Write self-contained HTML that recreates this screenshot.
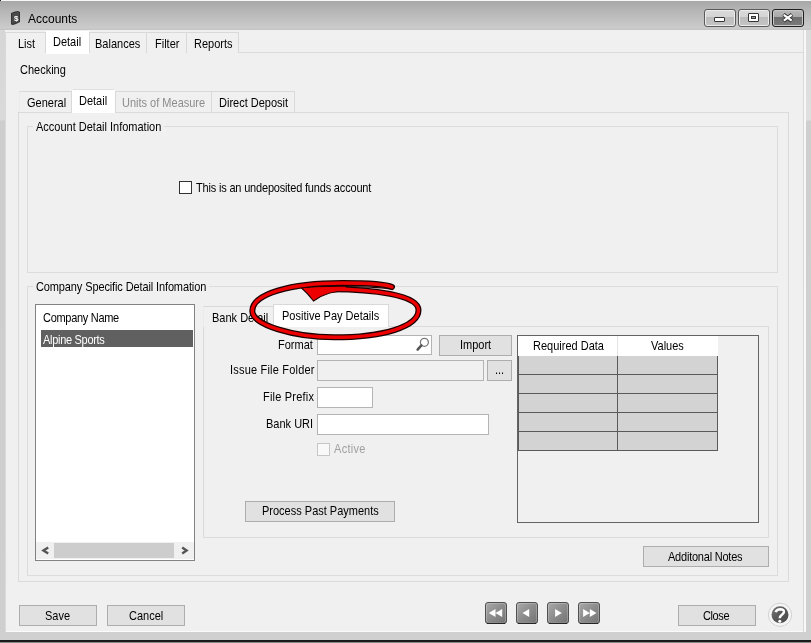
<!DOCTYPE html>
<html><head><meta charset="utf-8">
<style>
*{box-sizing:border-box}
html,body{margin:0;padding:0;width:811px;height:643px;overflow:hidden;background:#f0f0f0}
body{position:relative;font-family:"Liberation Sans",sans-serif;font-size:11px;color:#000}
.a{position:absolute}
.t{position:absolute;white-space:nowrap;font-size:11px;line-height:15px;will-change:transform;transform-origin:0 11.3px;transform:scaleY(1.1)}
.tab{position:absolute;background:#f0f0f0;border:1px solid #d9d9d9;border-bottom:none}
.tabs{position:absolute;background:#fff;border:1px solid #d9d9d9;border-bottom:none}
.grp{position:absolute;border:1px solid #dcdcdc}
.btn{position:absolute;background:#e1e1e1;border:1px solid #adadad}
.inp{position:absolute;background:#fff;border:1px solid #b4b4b4}
</style></head><body>
<!-- frame -->
<div class="a" style="left:0;top:0;width:811px;height:1px;background:#f6f6f6"></div>
<div class="a" style="left:0;top:0;width:1px;height:1px;background:#202020"></div>
<div class="a" style="left:0;top:1px;width:811px;height:29px;background:linear-gradient(#a7a7a7,#b6b6b6 35%,#cbcbcb 92%,#c3c3c3)"></div>
<div class="a" style="left:0;top:30px;width:5px;height:613px;background:linear-gradient(#d6d6d6,#dadada 90px,#cdcdcd 91px,#cfcfcf)"></div>
<div class="a" style="left:806px;top:30px;width:5px;height:613px;background:linear-gradient(#dcdcdc,#e0e0e0 90px,#cfcfcf 91px,#d0d0d0)"></div>
<div class="a" style="left:0;top:632px;width:811px;height:8px;background:#d0d0d0"></div>
<div class="a" style="left:5px;top:631px;width:801px;height:1px;background:#fbfbfb"></div>
<div class="a" style="left:5px;top:52px;width:1px;height:580px;background:#f7f7f7"></div>
<div class="a" style="left:803px;top:30px;width:1px;height:23px;background:#dcdcdc"></div>
<div class="a" style="left:804px;top:30px;width:2px;height:602px;background:#f8f8f8"></div>
<div class="a" style="left:0;top:640px;width:811px;height:2px;background:#1a1a1a"></div>
<div class="a" style="left:0;top:642px;width:811px;height:1px;background:#8a8a8a"></div>

<!-- title -->
<div class="t" style="left:28px;top:12px;font-size:12px;line-height:14px;color:#000;transform:none">Accounts</div>

<!-- main tabs -->
<div class="a" style="left:5px;top:52px;width:799px;height:580px;border:1px solid #dadada;border-bottom:none;border-right-color:#d8d8d8"></div>
<div class="tab" style="left:5px;top:32px;width:41px;height:21px"></div>
<div class="tabs" style="left:46px;top:31px;width:43px;height:23px;border-color:#fff"></div>
<div class="tab" style="left:89px;top:32px;width:58px;height:21px"></div>
<div class="tab" style="left:146px;top:32px;width:41px;height:21px"></div>
<div class="tab" style="left:186px;top:32px;width:53px;height:21px"></div>
<div class="t" style="left:18px;top:37px">List</div>
<div class="t" style="left:53px;top:35px">Detail</div>
<div class="t" style="left:95px;top:37px">Balances</div>
<div class="t" style="left:155px;top:37px">Filter</div>
<div class="t" style="left:194px;top:37px">Reports</div>

<div class="t" style="left:20px;top:63px">Checking</div>

<!-- inner tabs -->
<div class="a" style="left:18px;top:112px;width:771px;height:470px;border:1px solid #dadada"></div>
<div class="tab" style="left:19px;top:91px;width:53px;height:21px;border-left-color:#ebebeb"></div>
<div class="tabs" style="left:72px;top:89px;width:43px;height:24px;border-color:#fff;border-top-color:#dedede"></div>
<div class="tab" style="left:115px;top:91px;width:97px;height:21px"></div>
<div class="tab" style="left:211px;top:91px;width:84px;height:21px"></div>
<div class="t" style="left:27px;top:96px">General</div>
<div class="t" style="left:79px;top:94px">Detail</div>
<div class="t" style="left:122px;top:96px;color:#8c8c8c">Units of Measure</div>
<div class="t" style="left:219px;top:96px">Direct Deposit</div>

<!-- group 1 -->
<div class="grp" style="left:27px;top:126px;width:751px;height:147px"></div>
<div class="t" style="left:33px;top:120px;padding:0 3px;background:#f0f0f0">Account Detail Infomation</div>
<div class="a" style="left:179px;top:181px;width:13px;height:13px;background:#fff;border:1px solid #333"></div>
<div class="t" style="left:196px;top:181px;letter-spacing:-0.18px">This is an undeposited funds account</div>

<!-- group 2 -->
<div class="grp" style="left:27px;top:286px;width:751px;height:290px"></div>
<div class="t" style="left:33px;top:280px;padding:0 3px;background:#f0f0f0;letter-spacing:-0.12px">Company Specific Detail Infomation</div>

<!-- list -->
<div class="a" style="left:35px;top:304px;width:160px;height:257px;background:#fff;border:1px solid #828282"></div>
<div class="t" style="left:43px;top:311px;letter-spacing:-0.3px">Company Name</div>
<div class="a" style="left:41px;top:330px;width:152px;height:17px;background:#606060"></div>
<div class="t" style="left:43px;top:333px;color:#fff;letter-spacing:-0.3px">Alpine Sports</div>
<div class="a" style="left:36px;top:542px;width:158px;height:17px;background:#f0f0f0"></div>
<div class="a" style="left:54px;top:543px;width:120px;height:15px;background:#cdcdcd"></div>

<!-- bank tabs -->
<div class="a" style="left:203px;top:326px;width:566px;height:212px;border:1px solid #dadada"></div>
<div class="tab" style="left:203px;top:306px;width:72px;height:21px;border-left-color:#ebebeb"></div>
<div class="tabs" style="left:273px;top:304px;width:116px;height:23px;border-color:#d9d9d9"></div>
<div class="t" style="left:212px;top:311px">Bank Detail</div>
<div class="t" style="left:282px;top:309px">Positive Pay Details</div>

<div class="t" style="left:278px;top:338px">Format</div>
<div class="inp" style="left:317px;top:335px;width:115px;height:20px"></div>
<div class="btn" style="left:439px;top:335px;width:73px;height:21px"></div>
<div class="t" style="left:460px;top:338px">Import</div>
<div class="t" style="left:230px;top:363px;letter-spacing:0.2px">Issue File Folder</div>
<div class="inp" style="left:317px;top:360px;width:167px;height:21px;background:#f0f0f0;border-color:#b4b4b4"></div>
<div class="btn" style="left:487px;top:360px;width:25px;height:21px"></div>
<div class="t" style="left:263px;top:390px;letter-spacing:0.2px">File Prefix</div>
<div class="inp" style="left:317px;top:387px;width:56px;height:21px"></div>
<div class="t" style="left:266px;top:417px">Bank URI</div>
<div class="inp" style="left:317px;top:414px;width:172px;height:21px"></div>
<div class="a" style="left:317px;top:443px;width:13px;height:13px;border:1px solid #c6c6c6;background:#f9f9f9"></div>
<div class="t" style="left:334px;top:442px;color:#a0a0a0;letter-spacing:0.3px">Active</div>

<div class="btn" style="left:245px;top:501px;width:150px;height:21px"></div>
<div class="t" style="left:262px;top:504px">Process Past Payments</div>

<!-- grid -->
<div class="a" style="left:517px;top:335px;width:242px;height:188px;border:1px solid #646464;background:#f0f0f0"></div>
<div class="a" style="left:518px;top:336px;width:200px;height:20px;background:#fff"></div>
<div class="t" style="left:533px;top:339px">Required Data</div>
<div class="t" style="left:651px;top:339px">Values</div>

<div class="btn" style="left:643px;top:546px;width:126px;height:21px"></div>
<div class="t" style="left:668px;top:550px;letter-spacing:-0.22px">Additonal Notes</div>

<!-- bottom buttons -->
<div class="btn" style="left:19px;top:605px;width:78px;height:21px"></div>
<div class="t" style="left:45px;top:609px">Save</div>
<div class="btn" style="left:107px;top:605px;width:78px;height:21px"></div>
<div class="t" style="left:129px;top:609px">Cancel</div>
<div class="btn" style="left:678px;top:605px;width:78px;height:21px"></div>
<div class="t" style="left:703px;top:609px;letter-spacing:-0.4px">Close</div>


<!-- title icon -->
<svg class="a" style="left:0;top:0" width="30" height="30">
<polygon points="11,13 15,11.5 18,11 20,12 20,22 16,24 13,25 11,24.5" fill="#333"/>
<polygon points="12,13.5 19,11.5 19,21.5 12,24" fill="#4a4a4a"/>
<text x="16.2" y="20.8" font-family="Liberation Sans" font-size="8" font-weight="bold" fill="#fff" text-anchor="middle">$</text>
</svg>
<!-- window buttons -->
<div class="a" style="left:704px;top:9px;width:32px;height:18px;border:1px solid #5a5a5a;border-radius:3px;background:linear-gradient(#dadada,#d4d4d4 45%,#bcbcbc 46%,#c4c4c4);box-shadow:inset 0 0 0 1px #ececec"></div>
<div class="a" style="left:714px;top:17px;width:11px;height:5px;border:1px solid #333;border-radius:1px;background:#fff"></div>
<div class="a" style="left:738px;top:9px;width:32px;height:18px;border:1px solid #5a5a5a;border-radius:3px;background:linear-gradient(#dadada,#d4d4d4 45%,#bcbcbc 46%,#c4c4c4);box-shadow:inset 0 0 0 1px #ececec"></div>
<div class="a" style="left:748px;top:13px;width:11px;height:9px;border:1px solid #333;border-radius:1px;background:#fff"></div>
<div class="a" style="left:751px;top:16px;width:5px;height:3px;border:1px solid #333;background:#9a9a9a"></div>
<div class="a" style="left:772px;top:9px;width:32px;height:18px;border:1px solid #1e1e1e;border-radius:3px;background:linear-gradient(#b8b8b8,#a8a8a8 45%,#6e6e6e 46%,#7a7a7a);box-shadow:inset 0 0 0 1px #c8c8c8"></div>
<svg class="a" style="left:772px;top:9px" width="32" height="18">
<path d="M11.5,5.5 L20,12 M20,5.5 L11.5,12" stroke="#2a2a2a" stroke-width="4" stroke-linecap="butt"/>
<path d="M11.8,5.8 L19.7,11.7 M19.7,5.8 L11.8,11.7" stroke="#fff" stroke-width="2.3" stroke-linecap="butt"/>
</svg>

<!-- grid rows -->
<svg class="a" style="left:517px;top:335px" width="242" height="188">
<rect x="1" y="21" width="200" height="95" fill="#d3d3d3"/>
<path d="M1.5,21 V115.5 M100.5,21 V115.5 M200.5,21 V115.5 M1,39.5 H201 M1,58.5 H201 M1,77.5 H201 M1,96.5 H201 M1,115.5 H201" stroke="#5a5a5a" stroke-width="1"/>
<path d="M100.5,1 V21" stroke="#e3e3e3" stroke-width="1"/>
</svg>

<!-- ... button text -->
<div class="t" style="left:495px;top:363px">...</div>
<!-- magnifier -->
<svg class="a" style="left:410px;top:336px" width="22" height="19">
<circle cx="14.4" cy="6.3" r="4" fill="none" stroke="#7a7a7a" stroke-width="1.3"/>
<path d="M11.4,9.4 L7.6,13.6" stroke="#555" stroke-width="2.5" stroke-linecap="round"/>
</svg>
<!-- scroll arrows -->
<svg class="a" style="left:36px;top:542px" width="158" height="17">
<path d="M12.2,5.4 L7.4,8.5 L12.2,11.6" fill="none" stroke="#555" stroke-width="2.4"/>
<path d="M146.2,5.4 L150.6,8.5 L146.2,11.6" fill="none" stroke="#555" stroke-width="2.4"/>
</svg>

<!-- nav buttons -->
<svg class="a" style="left:480px;top:598px" width="130" height="30">
<defs><linearGradient id="ng" x1="0" y1="0" x2="1" y2="1"><stop offset="0" stop-color="#ababab"/><stop offset="0.5" stop-color="#8c8c8c"/><stop offset="1" stop-color="#737373"/></linearGradient></defs>
<g stroke="#505050">
<rect x="5.5" y="4.5" width="21" height="21" rx="2.5" fill="url(#ng)"/>
<rect x="36.5" y="4.5" width="21" height="21" rx="2.5" fill="url(#ng)"/>
<rect x="67.5" y="4.5" width="21" height="21" rx="2.5" fill="url(#ng)"/>
<rect x="98.5" y="4.5" width="21" height="21" rx="2.5" fill="url(#ng)"/>
</g>
<g stroke="#262626" stroke-width="1.2">
<path d="M7,25.4 H25 M38,25.4 H56 M69,25.4 H87 M100,25.4 H118"/>
</g>
<g fill="none" stroke="rgba(255,255,255,0.22)">
<rect x="6.5" y="5.5" width="19" height="19" rx="2"/>
<rect x="37.5" y="5.5" width="19" height="19" rx="2"/>
<rect x="68.5" y="5.5" width="19" height="19" rx="2"/>
<rect x="99.5" y="5.5" width="19" height="19" rx="2"/>
</g>
<path d="M8.8,15 L15.5,11 V19 Z M15.5,15 L22.2,11 V19 Z" fill="#fff"/>
<path d="M42.5,15 L49.2,11 V19 Z" fill="#fff"/>
<path d="M81.8,15 L75.1,11 V19 Z" fill="#fff"/>
<path d="M116.5,15 L109.8,11 V19 Z M109.8,15 L103.1,11 V19 Z" fill="#fff"/>
</svg>

<!-- help -->
<svg class="a" style="left:766px;top:601px" width="28" height="28">
<defs><linearGradient id="hg" x1="0" y1="0" x2="1" y2="1"><stop offset="0" stop-color="#7a7a7a"/><stop offset="0.45" stop-color="#5a5a5a"/><stop offset="1" stop-color="#4a4a4a"/></linearGradient></defs>
<circle cx="14" cy="13.8" r="11.6" fill="#f6f6f6" stroke="#d2d2d2" stroke-width="1"/>
<circle cx="14" cy="13.8" r="8.5" fill="url(#hg)"/>
<path d="M9.6,11.2 Q10.6,8.2 14.3,8.2 Q18.2,8.3 17.9,11 Q17.6,12.8 15.4,14.2 Q13.8,15.3 13.7,17.3" fill="none" stroke="#fff" stroke-width="2.5"/>
<circle cx="13.8" cy="20.2" r="1.5" fill="#fff"/>
</svg>

<!-- red ellipse annotation -->
<svg class="a" style="left:240px;top:270px" width="190" height="80">
<g transform="translate(-240,-270)" fill="none" stroke-linecap="round">
<path id="lp" d="M 330,289.2 C 372,289 418.5,295 418.5,310 C 418.5,327 382,337.3 334,337.3 C 294,337.3 252.3,325 252.3,311 C 252.3,294 290,283 342,283 C 367,283 386,284 392,287" stroke="#1e0000" stroke-width="6"/>
<path d="M 325,286.8 C 355,286.3 378,287.2 391,289" stroke="#1e0000" stroke-width="1.3"/>
<path d="M 301.5,288 Q 322,285.8 345,286.2 L 352,290.5 Q 328,290 313.5,301 Q 308,293.5 301.5,288 Z" fill="#e80000" stroke="#250000" stroke-width="1.1"/>
<path d="M 330,289.2 C 372,289 418.5,295 418.5,310 C 418.5,327 382,337.3 334,337.3 C 294,337.3 252.3,325 252.3,311 C 252.3,294 290,283 342,283 C 367,283 386,284 392,287" stroke="#ee0000" stroke-width="3.4"/>
<path d="M 303.5,288.2 Q 322,287 345,287.5 Q 326,290 313.5,299.5 Q 309,293 303.5,288.2 Z" fill="#ee0000"/>
</g>
</svg>
</body></html>
